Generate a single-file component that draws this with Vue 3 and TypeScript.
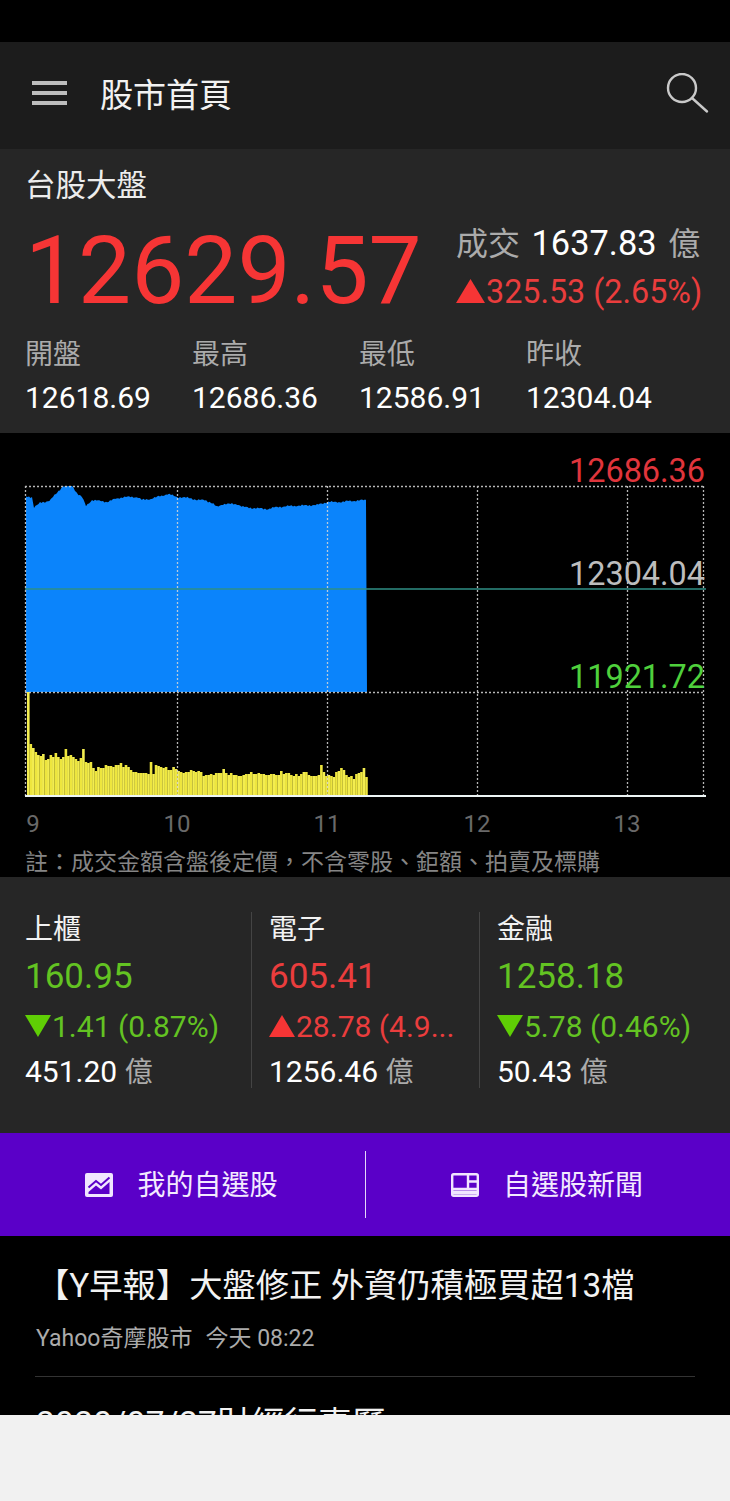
<script setup lang="ts">
// price line traced from the intraday chart, x/y in page pixels
const pricePts: [number, number][] = [
  [26, 497], [32, 497], [34, 507], [40, 503], [45, 502], [50, 500], [57, 493], [63, 486],
  [72, 486], [77, 493], [82, 497], [86, 506], [92, 500], [100, 501], [107, 502], [115, 499],
  [123, 497], [137, 497], [142, 500], [150, 499], [157, 497], [168, 494], [177, 497], [190, 498],
  [197, 500], [205, 500], [212, 503], [217, 507], [223, 504], [237, 504], [243, 507], [253, 508],
  [268, 509], [277, 507], [290, 506], [317, 505], [327, 502], [340, 502], [350, 501], [366, 500],
]

// walk the traced line in small steps so the edge gets the tick-by-tick roughness
function roughLine(pts: [number, number][]): string[] {
  const out: string[] = []
  for (let i = 0; i < pts.length - 1; i++) {
    const [x0, y0] = pts[i]
    const [x1, y1] = pts[i + 1]
    for (let x = x0; x < x1; x += 1.5) {
      const y = y0 + ((y1 - y0) * (x - x0)) / (x1 - x0)
      const wobble = Math.sin(x * 1.7) * 0.6 + Math.sin(x * 0.43) * 0.5
      out.push(`${x},${Math.max(486, y + wobble).toFixed(1)}`)
    }
  }
  return out
}
const priceArea = [...roughLine(pricePts), '366,500', '367,692', '26,692'].join(' ')

const volumes = [
  104, 52, 48, 44, 41, 40, 42, 36, 37, 41, 39, 43, 39, 37, 39, 47, 40, 41, 39, 37,
  35, 38, 47, 34, 33, 34, 28, 25, 29, 28, 28, 31, 30, 30, 29, 31, 31, 33, 29, 31,
  29, 26, 24, 24, 23, 23, 23, 23, 22, 34, 22, 31, 30, 29, 28, 29, 26, 26, 29, 27,
  25, 24, 23, 24, 24, 26, 25, 24, 25, 24, 20, 21, 21, 22, 21, 23, 23, 23, 27, 23,
  21, 23, 21, 21, 20, 20, 21, 22, 22, 24, 22, 22, 23, 22, 22, 21, 21, 22, 22, 21,
  21, 25, 22, 23, 23, 21, 20, 22, 20, 22, 24, 24, 21, 20, 20, 20, 21, 31, 24, 20,
  21, 20, 19, 24, 25, 28, 26, 21, 19, 20, 17, 22, 23, 24, 28, 19,
]
const hours = [
  { label: '9', x: 33 },
  { label: '10', x: 177 },
  { label: '11', x: 327 },
  { label: '12', x: 477 },
  { label: '13', x: 627 },
]
const gridX = [25, 177, 327, 477, 627, 703]

const quotes = [
  { label: '開盤', value: '12618.69' },
  { label: '最高', value: '12686.36' },
  { label: '最低', value: '12586.91' },
  { label: '昨收', value: '12304.04' },
]
const sectors = [
  { name: '上櫃', price: '160.95', change: '1.41 (0.87%)', amount: '451.20', dir: 'down' },
  { name: '電子', price: '605.41', change: '28.78 (4.9...', amount: '1256.46', dir: 'up' },
  { name: '金融', price: '1258.18', change: '5.78 (0.46%)', amount: '50.43', dir: 'down' },
]
</script>

<template>
  <div class="page">
    <div class="statusbar"></div>

    <header class="toolbar">
      <div class="burger"><i></i><i></i><i></i></div>
      <h1>股市首頁</h1>
      <svg class="search" width="46" height="44" viewBox="0 0 46 44" fill="none" stroke="#c9c9c9" stroke-width="2.4">
        <circle cx="18" cy="15" r="14" />
        <path d="M28 25 L43 38.500" stroke-linecap="round" />
      </svg>
    </header>

    <section class="summary">
      <div class="summary-title">台股大盤</div>
      <div class="headline">
        <div class="big">12629.57</div>
        <div class="side">
          <div class="turnover"><span class="dim">成交</span> 1637.83 <span class="dim">億</span></div>
          <div class="change up"><i class="tri"></i>325.53 (2.65%)</div>
        </div>
      </div>
      <div class="quotes">
        <div v-for="q in quotes" :key="q.label">
          <div class="q-label">{{ q.label }}</div>
          <div class="q-value">{{ q.value }}</div>
        </div>
      </div>
    </section>

    <section class="chart">
      <svg class="chart-svg" width="730" height="407" viewBox="0 433 730 407">
        <polygon :points="priceArea" fill="#0b84fb" />
        <rect
          v-for="(h, i) in volumes"
          :key="i"
          :x="27 + i * 2.505"
          :y="796 - h"
          width="2.6"
          :height="h"
          :fill="i % 2 ? '#eee63e' : '#f3ed50'"
        />
        <g stroke="#d8d8d8" stroke-width="1.300" stroke-dasharray="2 2" opacity="0.85">
          <line v-for="x in gridX" :key="x" :x1="x + 0.5" y1="486" :x2="x + 0.5" y2="796" />
          <line x1="25" y1="486.500" x2="704" y2="486.500" />
          <line x1="25" y1="692.500" x2="704" y2="692.500" />
        </g>
        <line x1="25" y1="589" x2="706" y2="589" stroke="#2f8f86" stroke-width="1.500" />
        <line x1="25" y1="796" x2="706" y2="796" stroke="#eef6f6" stroke-width="2" />
        <text class="axis-price" x="705" y="482" text-anchor="end" fill="#e0353c">12686.36</text>
        <text class="axis-price" x="705" y="585" text-anchor="end" fill="#bdbdbd">12304.04</text>
        <text class="axis-price" x="705" y="688" text-anchor="end" fill="#4fd03c">11921.72</text>
        <text v-for="h in hours" :key="h.label" class="axis-hour" :x="h.x" y="832" text-anchor="middle">{{ h.label }}</text>
      </svg>
      <p class="note">註：成交金額含盤後定價，不含零股、鉅額、拍賣及標購</p>
    </section>

    <section class="sectors">
      <div v-for="s in sectors" :key="s.name" class="sector">
        <div class="s-name">{{ s.name }}</div>
        <div class="s-price" :class="s.dir">{{ s.price }}</div>
        <div class="s-change" :class="s.dir"><i class="tri" :class="{ flip: s.dir === 'down' }"></i>{{ s.change }}</div>
        <div class="s-amount">{{ s.amount }} <span class="dim">億</span></div>
      </div>
    </section>

    <nav class="actions">
      <a class="action">
        <svg width="28" height="24" viewBox="0 0 28 24">
          <rect width="28" height="24" rx="2" fill="#f1e6ff" />
          <path d="M3.500 14.500 L11 8 L16 12 L24.500 4.500" fill="none" stroke="#5a00c8" stroke-width="2" />
          <path d="M3.500 21 L3.500 19 L11 12.500 L16 16.500 L24.500 9 L24.500 21 Z" fill="#5a00c8" />
        </svg>
        <span>我的自選股</span>
      </a>
      <a class="action">
        <svg width="28" height="24" viewBox="0 0 28 24" fill="none" stroke="#f1e6ff" stroke-width="2.400">
          <rect x="1.200" y="1.200" width="25.600" height="21.600" rx="1.500" />
          <path d="M1.200 16 H26.800 M17 1.200 V16 M17 8.500 H26.800" />
          <path d="M1.200 19.500 H26.800" stroke-width="4" />
        </svg>
        <span>自選股新聞</span>
      </a>
    </nav>

    <section class="news">
      <article class="news-item">
        <h2>【Y早報】大盤修正 外資仍積極買超13檔</h2>
        <div class="news-meta">Yahoo奇摩股市<span class="news-time">今天 08:22</span></div>
      </article>
      <article class="news-item">
        <h2 class="plain">2020/07/27財經行事曆</h2>
      </article>
    </section>

    <div class="bottom"></div>
  </div>
</template>

<style>
body {
  background: #000;
}
</style>

<style scoped>
.page {
  width: 730px;
  height: 1501px;
  display: flex;
  flex-direction: column;
  overflow: hidden;
  font-family: Roboto, "Noto Sans CJK TC", sans-serif;
  color: #fff;
  background: #000;
}

.statusbar {
  height: 42px;
  flex: none;
}

.toolbar {
  height: 107px;
  flex: none;
  display: flex;
  align-items: center;
  padding: 0 20px 0 32px;
  background: #1c1c1c;
}

.burger {
  width: 35px;
  display: flex;
  flex-direction: column;
  gap: 6px;
  margin-top: -6px;
  margin-right: 33px;
}

.burger i {
  display: block;
  height: 4px;
  background: #bdbdbd;
}

h1 {
  margin: 0;
  font-size: 33px;
  font-weight: 400;
  line-height: 40px;
  color: #f2f2f2;
}

.search {
  margin-left: auto;
  margin-top: -2px;
}

.summary {
  height: 284px;
  flex: none;
  padding: 18px 0 0 25px;
  box-sizing: border-box;
  background: #262626;
}

.summary-title {
  font-size: 30.500px;
  line-height: 38px;
  color: #ececec;
}

.headline {
  display: grid;
  grid-template-columns: 431px 1fr;
  height: 129px;
}

.big {
  font-size: 94.500px;
  line-height: 132px;
  color: #f63535;
  white-space: nowrap;
}

.side {
  padding-top: 14px;
  white-space: nowrap;
}

.turnover {
  font-size: 34.400px;
  line-height: 48px;
  word-spacing: 3px;
  color: #fff;
}

.dim {
  color: #ababab;
}

.turnover .dim {
  font-size: 32px;
}

.change {
  font-size: 32.300px;
  line-height: 48px;
}

.up {
  color: #ea3d3d;
}

.down {
  color: #63c322;
}

.tri {
  display: inline-block;
  width: 29px;
  height: 24px;
  margin-right: 1px;
  background: #f63535;
  clip-path: polygon(50% 0, 100% 100%, 0 100%);
}

.quotes {
  display: grid;
  grid-template-columns: repeat(4, 167px);
}

.q-label {
  font-size: 28px;
  line-height: 41px;
  color: #ababab;
}

.q-value {
  font-size: 30px;
  line-height: 46px;
  color: #fff;
}

.chart {
  height: 444px;
  flex: none;
  background: #000;
}

.chart-svg {
  display: block;
}

.axis-price {
  font-size: 32.400px;
}

.axis-hour {
  font-size: 24px;
  fill: #696969;
}

.note {
  margin: 0;
  padding: 8px 0 0 25px;
  font-size: 23px;
  line-height: 29px;
  color: #858585;
  white-space: nowrap;
}

.sectors {
  height: 256px;
  flex: none;
  display: grid;
  grid-template-columns: 251px 228px 1fr;
  padding-top: 35px;
  box-sizing: border-box;
  background: #262626;
}

.sector {
  height: 176px;
  padding-left: 17px;
  border-left: 1px solid #444;
  white-space: nowrap;
}

.sector:first-child {
  padding-left: 25px;
  border-left: none;
}

.s-name {
  font-size: 28px;
  line-height: 36px;
  color: #f2f2f2;
}

.s-price {
  font-size: 35px;
  line-height: 58px;
}

.s-change {
  font-size: 30px;
  line-height: 42px;
}

.s-change .tri {
  width: 26px;
  height: 22px;
}

.s-change.down .tri {
  background: #5fce05;
}

.tri.flip {
  clip-path: polygon(0 0, 100% 0, 50% 100%);
}

.s-amount {
  font-size: 30px;
  line-height: 48px;
  color: #fff;
}

.s-amount .dim {
  font-size: 28px;
}

.actions {
  height: 103px;
  flex: none;
  display: grid;
  grid-template-columns: 365px 1fr;
  align-items: center;
  background: #5a00c8;
}

.action {
  height: 67px;
  padding-right: 2px;
  display: flex;
  align-items: center;
  justify-content: center;
  gap: 24px;
  font-size: 28px;
  color: #f3eaff;
}

.action span {
  margin-top: -4px;
}

.action + .action {
  border-left: 1px solid #e6d8fa;
}

.news {
  height: 179px;
  flex: none;
  padding: 0 35px;
  overflow: hidden;
  background: #000;
}

.news-item {
  padding-top: 29px;
}

.news-item + .news-item {
  padding-top: 26px;
  border-top: 1px solid #333;
}

h2 {
  margin: 0 0 0 1px;
  font-size: 33.300px;
  font-weight: 400;
  line-height: 42px;
  color: #f2f2f2;
  white-space: nowrap;
}

h2.plain {
  letter-spacing: 0.4px;
}

.news-meta {
  margin-top: 14px;
  padding-bottom: 20px;
  padding-left: 1px;
  font-size: 23px;
  line-height: 35px;
  color: #ababab;
}

.news-time {
  margin-left: 13px;
}

.bottom {
  flex: 1;
  background: #f1f1f1;
}
</style>
